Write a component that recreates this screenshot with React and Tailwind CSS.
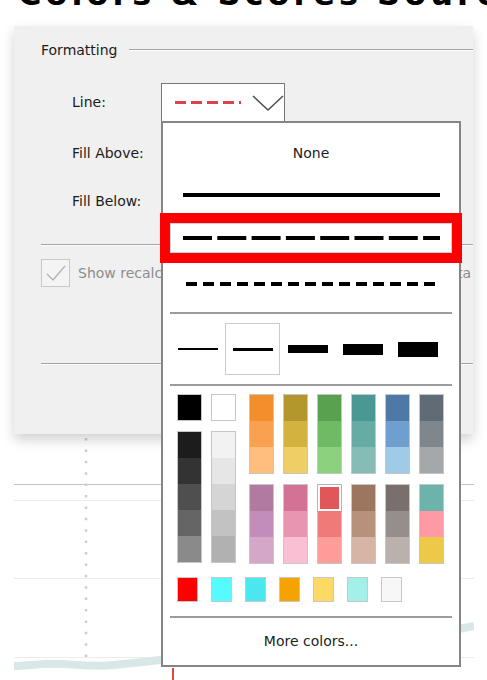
import React from 'react';

const topGroups = [
  ['#f28e2b', '#f9a150', '#ffbe7d'],
  ['#b3962c', '#d4b240', '#efce63'],
  ['#59a14f', '#6fbb64', '#8cd17d'],
  ['#499894', '#67aba5', '#86bcb6'],
  ['#4e79a7', '#6f9fcf', '#a0cbe8'],
  ['#616b76', '#7f878e', '#a4a8aa'],
];

const bottomGroups = [
  ['#b07aa1', '#c28db8', '#d4a6c8'],
  ['#d37295', '#e895b2', '#fabfd2'],
  ['#e15759', '#f07a78', '#ff9d9a'],
  ['#9d7660', '#b8917c', '#d7b5a6'],
  ['#79706e', '#968e8b', '#bab0ac'],
  ['#6db3a9', '#ff9aa4', '#edc948'],
];

const darks = ['#1c1c1c', '#333333', '#4f4f4f', '#656565', '#8a8a8a'];
const lights = ['#f2f2f2', '#e6e6e6', '#d5d5d5', '#c2c2c2', '#b1b1b1'];
const extras = ['#ff0000', '#55fbff', '#4ae8ee', '#f5a300', '#ffd966', '#a3f0e8', '#f7f7f7'];
const weights = [2, 3, 8, 11, 15];

const Swatches = ({ colors, selected }) => (
  <div className="flex w-[25px] flex-col border border-[#c6c6c6]">
    {colors.map((c, i) =>
      selected === i ? (
        <div key={c} className="h-[26px] border-2 border-white shadow-[0_0_0_1px_#b5b5b5]" style={{ background: c }} />
      ) : (
        <div key={c} className="h-[26px]" style={{ background: c }} />
      )
    )}
  </div>
);

const FormRow = ({ label, children, className }) => (
  <div className={`flex h-[39px] items-center ${className}`}>
    <span className="w-[89px] pl-[31px] box-content">{label}</span>
    {children}
  </div>
);

export default function App() {
  return (
    <div className="relative h-[680px] w-[487px] overflow-hidden bg-white font-['DejaVu_Sans',sans-serif] text-[14px] text-[#1c1c1c]">
      {/* cropped heading above the dialog */}
      <div className="h-[26px]">
        <div className="h-[8px] overflow-hidden">
          <div className="-mt-[22px] whitespace-nowrap pl-[18px] text-[32px] font-bold leading-[32px] tracking-[4px] text-black">
            Colors &amp; Scores Sources
          </div>
        </div>
      </div>

      {/* dialog panel */}
      <div className="relative z-10 ml-[14px] h-[408px] w-[459px] overflow-hidden bg-[#f0f0f0] pl-[27px] pt-[15px] shadow-[0_6px_12px_rgba(0,0,0,0.18)]">
        <div className="flex h-[18px] items-center">
          <span>Formatting</span>
          <div className="ml-[12px] h-[2px] flex-1 border-t border-b border-t-[#a3a3a3] border-b-white" />
        </div>

        <FormRow label="Line:" className="mt-[24px]">
          <div className="flex h-[39px] w-[124px] items-center border border-[#777777] bg-white pl-[13px]">
            <svg width="66" height="3" className="block">
              <line x1="0" y1="1.5" x2="66" y2="1.5" stroke="#e0404c" strokeWidth="3" strokeDasharray="11 5" />
            </svg>
            <svg width="32" height="16" className="ml-[11px] block">
              <polyline points="1,1 16,15 31,1" fill="none" stroke="#4a4a4a" strokeWidth="1.4" />
            </svg>
          </div>
        </FormRow>
        <FormRow label="Fill Above:" className="mt-[12px]" />
        <FormRow label="Fill Below:" className="mt-[9px]" />

        <div className="mt-[23px] h-[2px] border-t border-b border-t-[#a3a3a3] border-b-white" />

        <div className="mt-[13px] flex items-center">
          <div className="flex h-[28px] w-[29px] shrink-0 items-center justify-center border border-[#c8c8c8] bg-[#f4f4f4]">
            <svg width="20" height="16" className="block">
              <polyline points="1,9 7,15 19,1" fill="none" stroke="#b4b4b4" strokeWidth="1.4" />
            </svg>
          </div>
          <span className="ml-[8px] whitespace-nowrap text-[#8d8d8d]">
            Show recalculated values using the entire selected data
          </span>
        </div>

        <div className="mt-[76px] h-[2px] border-t border-b border-t-[#a3a3a3] border-b-white" />
      </div>

      {/* chart behind the dialog */}
      <svg width="460" height="246" className="ml-[14px] block">
        <line x1="0" y1="50.5" x2="460" y2="50.5" stroke="#c4c4c4" strokeWidth="1" />
        <line x1="0" y1="66.5" x2="460" y2="66.5" stroke="#ececec" strokeWidth="1" />
        <line x1="0" y1="144.5" x2="460" y2="144.5" stroke="#ececec" strokeWidth="1" />
        <line x1="0" y1="223.5" x2="460" y2="223.5" stroke="#ececec" strokeWidth="1" />
        <line x1="72" y1="4" x2="72" y2="240" stroke="#cdcdcd" strokeWidth="2.5" strokeDasharray="2.5 8.9" />
        <path
          d="M0 232 C 20 231, 35 229, 50 230 S 80 233, 100 231 S 130 228, 146 226 L 200 214 L 300 206 L 400 204 L 460 192"
          fill="none"
          stroke="#d8e8e6"
          strokeWidth="8"
        />
        <line x1="159" y1="234" x2="159" y2="246" stroke="#e04848" strokeWidth="2" />
      </svg>

      {/* open dropdown menu */}
      <div className="absolute left-[161px] top-[121px] z-20 flex h-[546px] w-[300px] flex-col border-2 border-[#858585] bg-white">
        <div className="flex h-[60px] items-center justify-center">None</div>
        <div className="flex h-[24px] items-center justify-center">
          <div className="h-[4px] w-[257px] bg-black" />
        </div>
        <div className="mx-[7px] mt-[16px] flex h-[30px] items-center justify-center border border-[#d2d2d2] outline-[10px] outline-solid outline-[#ff0000]">
          <svg width="257" height="4" className="block">
            <line x1="0" y1="2" x2="257" y2="2" stroke="#000" strokeWidth="4" strokeDasharray="29 5.3" />
          </svg>
        </div>
        <div className="mt-[19px] flex h-[24px] items-center justify-center">
          <svg width="250" height="4" className="block">
            <line x1="0" y1="2" x2="250" y2="2" stroke="#000" strokeWidth="4" strokeDasharray="11 6" />
          </svg>
        </div>
        <div className="mx-[7px] mt-[16px] h-[2px] bg-[#9c9c9c]" />

        <div className="ml-[7px] mt-[9px] flex h-[52px]">
          {weights.map((w, i) => (
            <div
              key={w}
              className={`flex w-[55px] items-center justify-center ${i === 1 ? 'border border-[#cccccc]' : ''}`}
            >
              <div className="w-[40px] bg-black" style={{ height: w }} />
            </div>
          ))}
        </div>
        <div className="mx-[7px] mt-[9px] h-[2px] bg-[#9c9c9c]" />

        <div className="ml-[14px] mt-[8px] flex">
          <div className="flex flex-col">
            <div className="h-[27px] w-[25px] border border-[#c6c6c6] bg-black" />
            <div className="mt-[10px]">
              <Swatches colors={darks} />
            </div>
          </div>
          <div className="ml-[9px] flex flex-col">
            <div className="h-[27px] w-[25px] border border-[#c6c6c6] bg-white" />
            <div className="mt-[10px]">
              <Swatches colors={lights} />
            </div>
          </div>
          <div className="ml-[13px] flex flex-col">
            <div className="flex gap-[9px]">
              {topGroups.map((g) => (
                <Swatches key={g[0]} colors={g} />
              ))}
            </div>
            <div className="mt-[10px] flex gap-[9px]">
              {bottomGroups.map((g, i) => (
                <Swatches key={g[0]} colors={g} selected={i === 2 ? 0 : -1} />
              ))}
            </div>
          </div>
        </div>

        <div className="ml-[14px] mt-[13px] flex gap-[13px]">
          {extras.map((c) => (
            <div key={c} className="h-[25px] w-[21px] border border-[#c8c8c8]" style={{ background: c }} />
          ))}
        </div>

        <div className="mx-[7px] mt-[14px] h-[2px] bg-[#9c9c9c]" />
        <div className="flex flex-1 items-center justify-center">More colors...</div>
      </div>
    </div>
  );
}
